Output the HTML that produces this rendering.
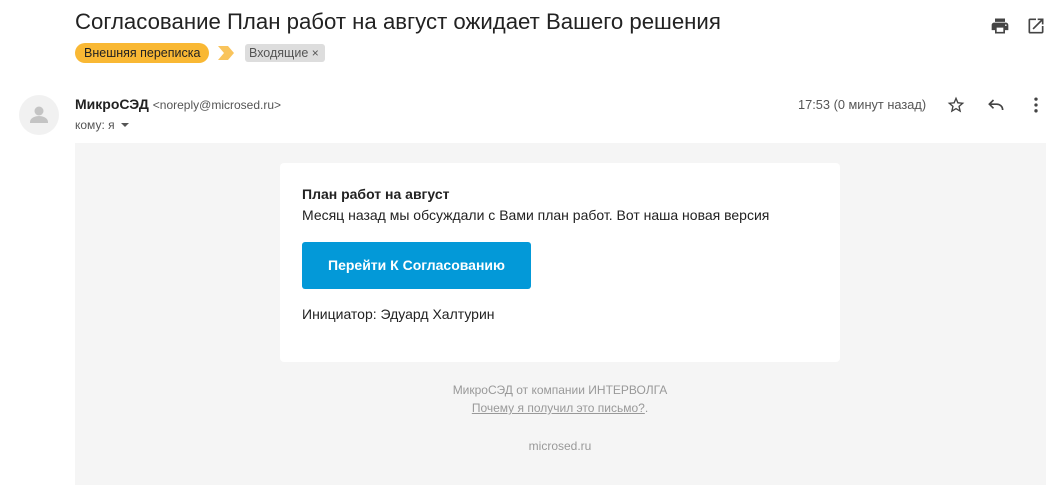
<!DOCTYPE html>
<html><head><meta charset="utf-8"><style>
*{margin:0;padding:0;box-sizing:border-box}
body{width:1061px;height:501px;background:#fff;font-family:"Liberation Sans",Arial,sans-serif;position:relative;overflow:hidden;color:#222}
.a{position:absolute;white-space:nowrap}
</style></head><body>
<div class="a" style="left:75px;top:9px;font-size:22.2px;color:#222">Согласование План работ на август ожидает Вашего решения</div>
<div class="a" style="left:75px;top:43px;height:20px;width:134px;background:#f9b834;border-radius:10px;font-size:12.5px;line-height:20px;padding-left:9px;color:#222">Внешняя переписка</div>
<svg class="a" style="left:218px;top:46px" width="17" height="14"><path d="M0 0h10l6 7-6 7H0l6-7z" fill="#f9c45c"/></svg>
<div class="a" style="left:245px;top:44px;height:18px;width:80px;background:#ddd;border-radius:3px;font-size:12.5px;line-height:18px;padding-left:4px;color:#555">Входящие <span style="font-size:12px">×</span></div>
<svg class="a" style="left:990px;top:16px" width="20" height="20" viewBox="0 0 24 24"><path fill="#444" d="M19 8H5c-1.66 0-3 1.34-3 3v6h4v4h12v-4h4v-6c0-1.66-1.34-3-3-3zm-3 11H8v-5h8v5zm3-7c-.55 0-1-.45-1-1s.45-1 1-1 1 .45 1 1-.45 1-1 1zm-1-9H6v4h12V3z"/></svg>
<svg class="a" style="left:1026px;top:16px" width="20" height="20" viewBox="0 0 24 24"><path fill="#444" d="M19 19H5V5h7V3H5a2 2 0 0 0-2 2v14a2 2 0 0 0 2 2h14c1.1 0 2-.9 2-2v-7h-2v7zM14 3v2h3.59l-9.83 9.83 1.41 1.41L19 6.41V10h2V3h-7z"/></svg>
<svg class="a" style="left:19px;top:95px" width="40" height="40"><circle cx="20" cy="20" r="20" fill="#f1f1f1"/><circle cx="20" cy="16" r="4.5" fill="#c4c4c4"/><path d="M11 27c0-4 5-6 9-6s9 2 9 6v1H11z" fill="#c4c4c4"/></svg>
<div class="a" style="left:75px;top:96px;font-size:14px"><b style="color:#222">МикроСЭД</b> <span style="font-size:12px;color:#555">&lt;noreply@microsed.ru&gt;</span></div>
<div class="a" style="left:75px;top:118px;font-size:12px;color:#555">кому: я <svg width="10" height="8" style="margin-left:2px"><path d="M1 2h8L5 6z" fill="#555"/></svg></div>
<div class="a" style="left:798px;top:97px;font-size:12.8px;color:#555">17:53 (0 минут назад)</div>
<svg class="a" style="left:946px;top:95px" width="20" height="20" viewBox="0 0 24 24"><path fill="#444" d="M22 9.24l-7.19-.62L12 2 9.19 8.63 2 9.24l5.46 4.73L5.82 21 12 17.27 18.18 21l-1.63-7.03L22 9.24zM12 15.4l-3.76 2.27 1-4.28-3.32-2.88 4.38-.38L12 6.1l1.71 4.04 4.38.38-3.32 2.88 1 4.28L12 15.4z"/></svg>
<svg class="a" style="left:986px;top:95px" width="20" height="20" viewBox="0 0 24 24"><path fill="none" stroke="#444" stroke-width="2" d="M9 6L4 11l5 5M4 11h9c4 0 7 3 7 7"/></svg>
<svg class="a" style="left:1026px;top:95px" width="20" height="20" viewBox="0 0 24 24"><circle cx="12" cy="5" r="2" fill="#444"/><circle cx="12" cy="12" r="2" fill="#444"/><circle cx="12" cy="19" r="2" fill="#444"/></svg>
<div class="a" style="left:75px;top:143px;width:971px;height:342px;background:#f5f5f5"></div>
<div class="a" style="left:280px;top:163px;width:560px;height:199px;background:#fff;border-radius:4px"></div>
<div class="a" style="left:302px;top:186px;font-size:14px;font-weight:bold;color:#222">План работ на август</div>
<div class="a" style="left:302px;top:207px;font-size:14px;color:#222">Месяц назад мы обсуждали с Вами план работ. Вот наша новая версия</div>
<div class="a" style="left:302px;top:242px;width:229px;height:47px;background:#0399d8;border-radius:3px;color:#fff;font-weight:bold;font-size:14px;line-height:47px;text-align:center">Перейти К Согласованию</div>
<div class="a" style="left:302px;top:306px;font-size:14px;color:#222">Инициатор: Эдуард Халтурин</div>
<div class="a" style="left:280px;width:560px;top:383px;font-size:12px;color:#999;text-align:center">МикроСЭД от компании ИНТЕРВОЛГА</div>
<div class="a" style="left:280px;width:560px;top:401px;font-size:12px;color:#999;text-align:center"><span style="text-decoration:underline">Почему я получил это письмо?</span>.</div>
<div class="a" style="left:280px;width:560px;top:439px;font-size:12px;color:#999;text-align:center">microsed.ru</div>
</body></html>
